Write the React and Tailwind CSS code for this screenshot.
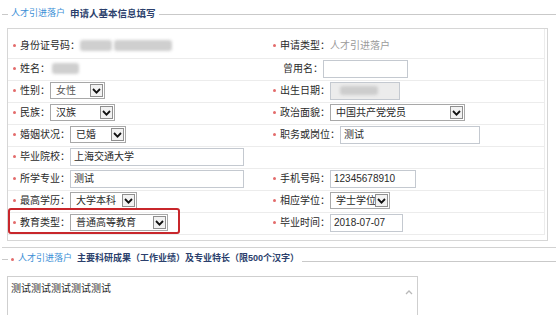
import React from 'react';

const Dot = ({ hide }) => (
  <span className={`inline-block w-[3px] h-[3px] rounded-full mr-[4px] shrink-0 ${hide ? 'bg-transparent' : 'bg-[#e36b6b]'}`} />
);

const Chevron = () => (
  <svg width="9" height="6" viewBox="0 0 9 6">
    <path d="M1 1 L4.5 4.6 L8 1" fill="none" stroke="#111" strokeWidth="1.8" />
  </svg>
);

function Select({ value, w, muted }) {
  return (
    <div className={`flex h-[17px] border border-[#a8a8a8] bg-white ${w}`}>
      <span className={`flex-1 pl-[5px] leading-[15px] whitespace-nowrap overflow-hidden ${muted ? 'text-[#555]' : 'text-[#2a2a2a]'}`}>{value}</span>
      <span className="w-[13px] my-[1px] mr-[1px] border border-[#8f8f8f] bg-[#f2f2f2] flex items-center justify-center">
        <Chevron />
      </span>
    </div>
  );
}

function Input({ value, w, disabled, children }) {
  return (
    <div
      className={`h-[18px] border border-[#c4c9d0] px-[3px] leading-[16px] text-[#2a2a2a] whitespace-nowrap ${w} ${disabled ? 'bg-[#ececec]' : 'bg-white'}`}
    >
      {value}
      {children}
    </div>
  );
}

function Field({ label, dot = true, children, extra }) {
  return (
    <div className={`flex items-center ${extra || ''}`}>
      <Dot hide={!dot} />
      <span className="text-[#2a2a2a] whitespace-nowrap">{label}</span>
      {children}
    </div>
  );
}

function Row({ left, right, first }) {
  return (
    <div
      className={`relative grid grid-cols-[262px_1fr] items-center border-b border-[#ececec] ${first ? 'h-[30px] pt-[3px]' : 'h-[22px] pb-[2px]'}`}
    >
      <div className="pl-[5px]">{left}</div>
      <div className="pl-[3px]">{right}</div>
    </div>
  );
}

export default function App() {
  return (
    <div className="w-[558px] h-[315px] overflow-hidden bg-white text-[10px] font-['Liberation_Sans','Noto_Sans_CJK_SC',sans-serif]">
      {/* legend 1 */}
      <div className="flex items-center h-[18px] mt-[5px]">
        <div className="w-[6px] h-px bg-[#c9c9c9] ml-[2px]" />
        <div className="px-[3px] whitespace-nowrap flex items-center">
          <span className="text-[#3c8fd6] text-[9px]">人才引进落户</span>
          <span className="ml-[5px] text-[#2b3f6c] text-[9.5px] font-bold">申请人基本信息填写</span>
        </div>
        <div className="flex-1 h-px bg-[#c9c9c9] mr-[2px]" />
      </div>

      {/* form box */}
      <div className="mt-[5px] ml-[7px] w-[541px] border border-[#d6d6d6] pb-[5px]">
        <div className="mr-[2px] border-r border-[#ececec]">
          <Row
            first
            left={
              <Field label="身份证号码：">
                <span className="flex gap-[2px]">
                  <span className="w-[32px] h-[11px] rounded-[3px] bg-[#cfcfcf] blur-[1.5px]" />
                  <span className="w-[58px] h-[11px] rounded-[3px] bg-[#cfcfcf] blur-[1.5px]" />
                </span>
              </Field>
            }
            right={
              <Field label="申请类型：">
                <span className="text-[#9a9a9a]">人才引进落户</span>
              </Field>
            }
          />
          <Row
            left={
              <Field label="姓名：">
                <span className="ml-[2px] w-[27px] h-[11px] rounded-[3px] bg-[#cfcfcf] blur-[1.5px]" />
              </Field>
            }
            right={
              <Field label="曾用名：" dot={false} extra="pl-[3px]">
                <Input w="w-[85px]" />
              </Field>
            }
          />
          <Row
            left={
              <Field label="性别：">
                <Select value="女性" w="w-[55px]" muted />
              </Field>
            }
            right={
              <Field label="出生日期：">
                <Input w="w-[70px]" disabled>
                  <span className="inline-block mt-[3px] ml-[6px] w-[38px] h-[9px] rounded-[3px] bg-[#cdcdcd] blur-[1.5px]" />
                </Input>
              </Field>
            }
          />
          <Row
            left={
              <Field label="民族：">
                <Select value="汉族" w="w-[65px]" />
              </Field>
            }
            right={
              <Field label="政治面貌：">
                <Select value="中国共产党党员" w="w-[135px]" />
              </Field>
            }
          />
          <Row
            left={
              <Field label="婚姻状况：">
                <Select value="已婚" w="w-[56px]" />
              </Field>
            }
            right={
              <Field label="职务或岗位：">
                <Input value="测试" w="w-[140px]" />
              </Field>
            }
          />
          <Row
            left={
              <Field label="毕业院校：">
                <Input value="上海交通大学" w="w-[174px]" />
              </Field>
            }
            right={null}
          />
          <Row
            left={
              <Field label="所学专业：">
                <Input value="测试" w="w-[174px]" />
              </Field>
            }
            right={
              <Field label="手机号码：">
                <Input value="12345678910" w="w-[86px]" />
              </Field>
            }
          />
          <Row
            left={
              <Field label="最高学历：">
                <Select value="大学本科" w="w-[67px]" />
              </Field>
            }
            right={
              <Field label="相应学位：">
                <Select value="学士学位" w="w-[60px]" />
              </Field>
            }
          />
          <Row
            left={
              <div className="relative">
                <Field label="教育类型：">
                  <Select value="普通高等教育" w="w-[98px]" />
                </Field>
                <div className="absolute left-[-5px] top-[-6px] w-[172px] h-[26px] border-2 border-[#c8262b] rounded-[3px]" />
              </div>
            }
            right={
              <Field label="毕业时间：">
                <Input value="2018-07-07" w="w-[73px]" />
              </Field>
            }
          />
        </div>
      </div>

      <div className="mt-[6px] mx-[2px] h-px bg-[#d2d2d2]" />

      {/* legend 2 */}
      <div className="flex items-center h-[18px] mt-[2px]">
        <div className="w-[6px] h-px bg-[#c9c9c9] ml-[2px]" />
        <div className="px-[3px] whitespace-nowrap flex items-center">
          <Dot />
          <span className="text-[#3c8fd6] text-[9px]">人才引进落户</span>
          <span className="ml-[5px] text-[#2b3f6c] text-[9px] font-bold">主要科研成果（工作业绩）及专业特长（限500个汉字）</span>
        </div>
        <div className="flex-1 h-px bg-[#c9c9c9] mr-[2px] mt-[4px]" />
      </div>

      <div className="relative mt-[8px] ml-[7px] w-[411px] h-[60px] border border-[#cfcfcf] px-[3px] pt-[4px] text-[#2a2a2a]">
        测试测试测试测试测试
        <svg className="absolute right-[4px] top-[13px]" width="8" height="5" viewBox="0 0 8 5">
          <path d="M1 4 L4 1 L7 4" fill="none" stroke="#b9b9b9" strokeWidth="1.3" />
        </svg>
      </div>
    </div>
  );
}
